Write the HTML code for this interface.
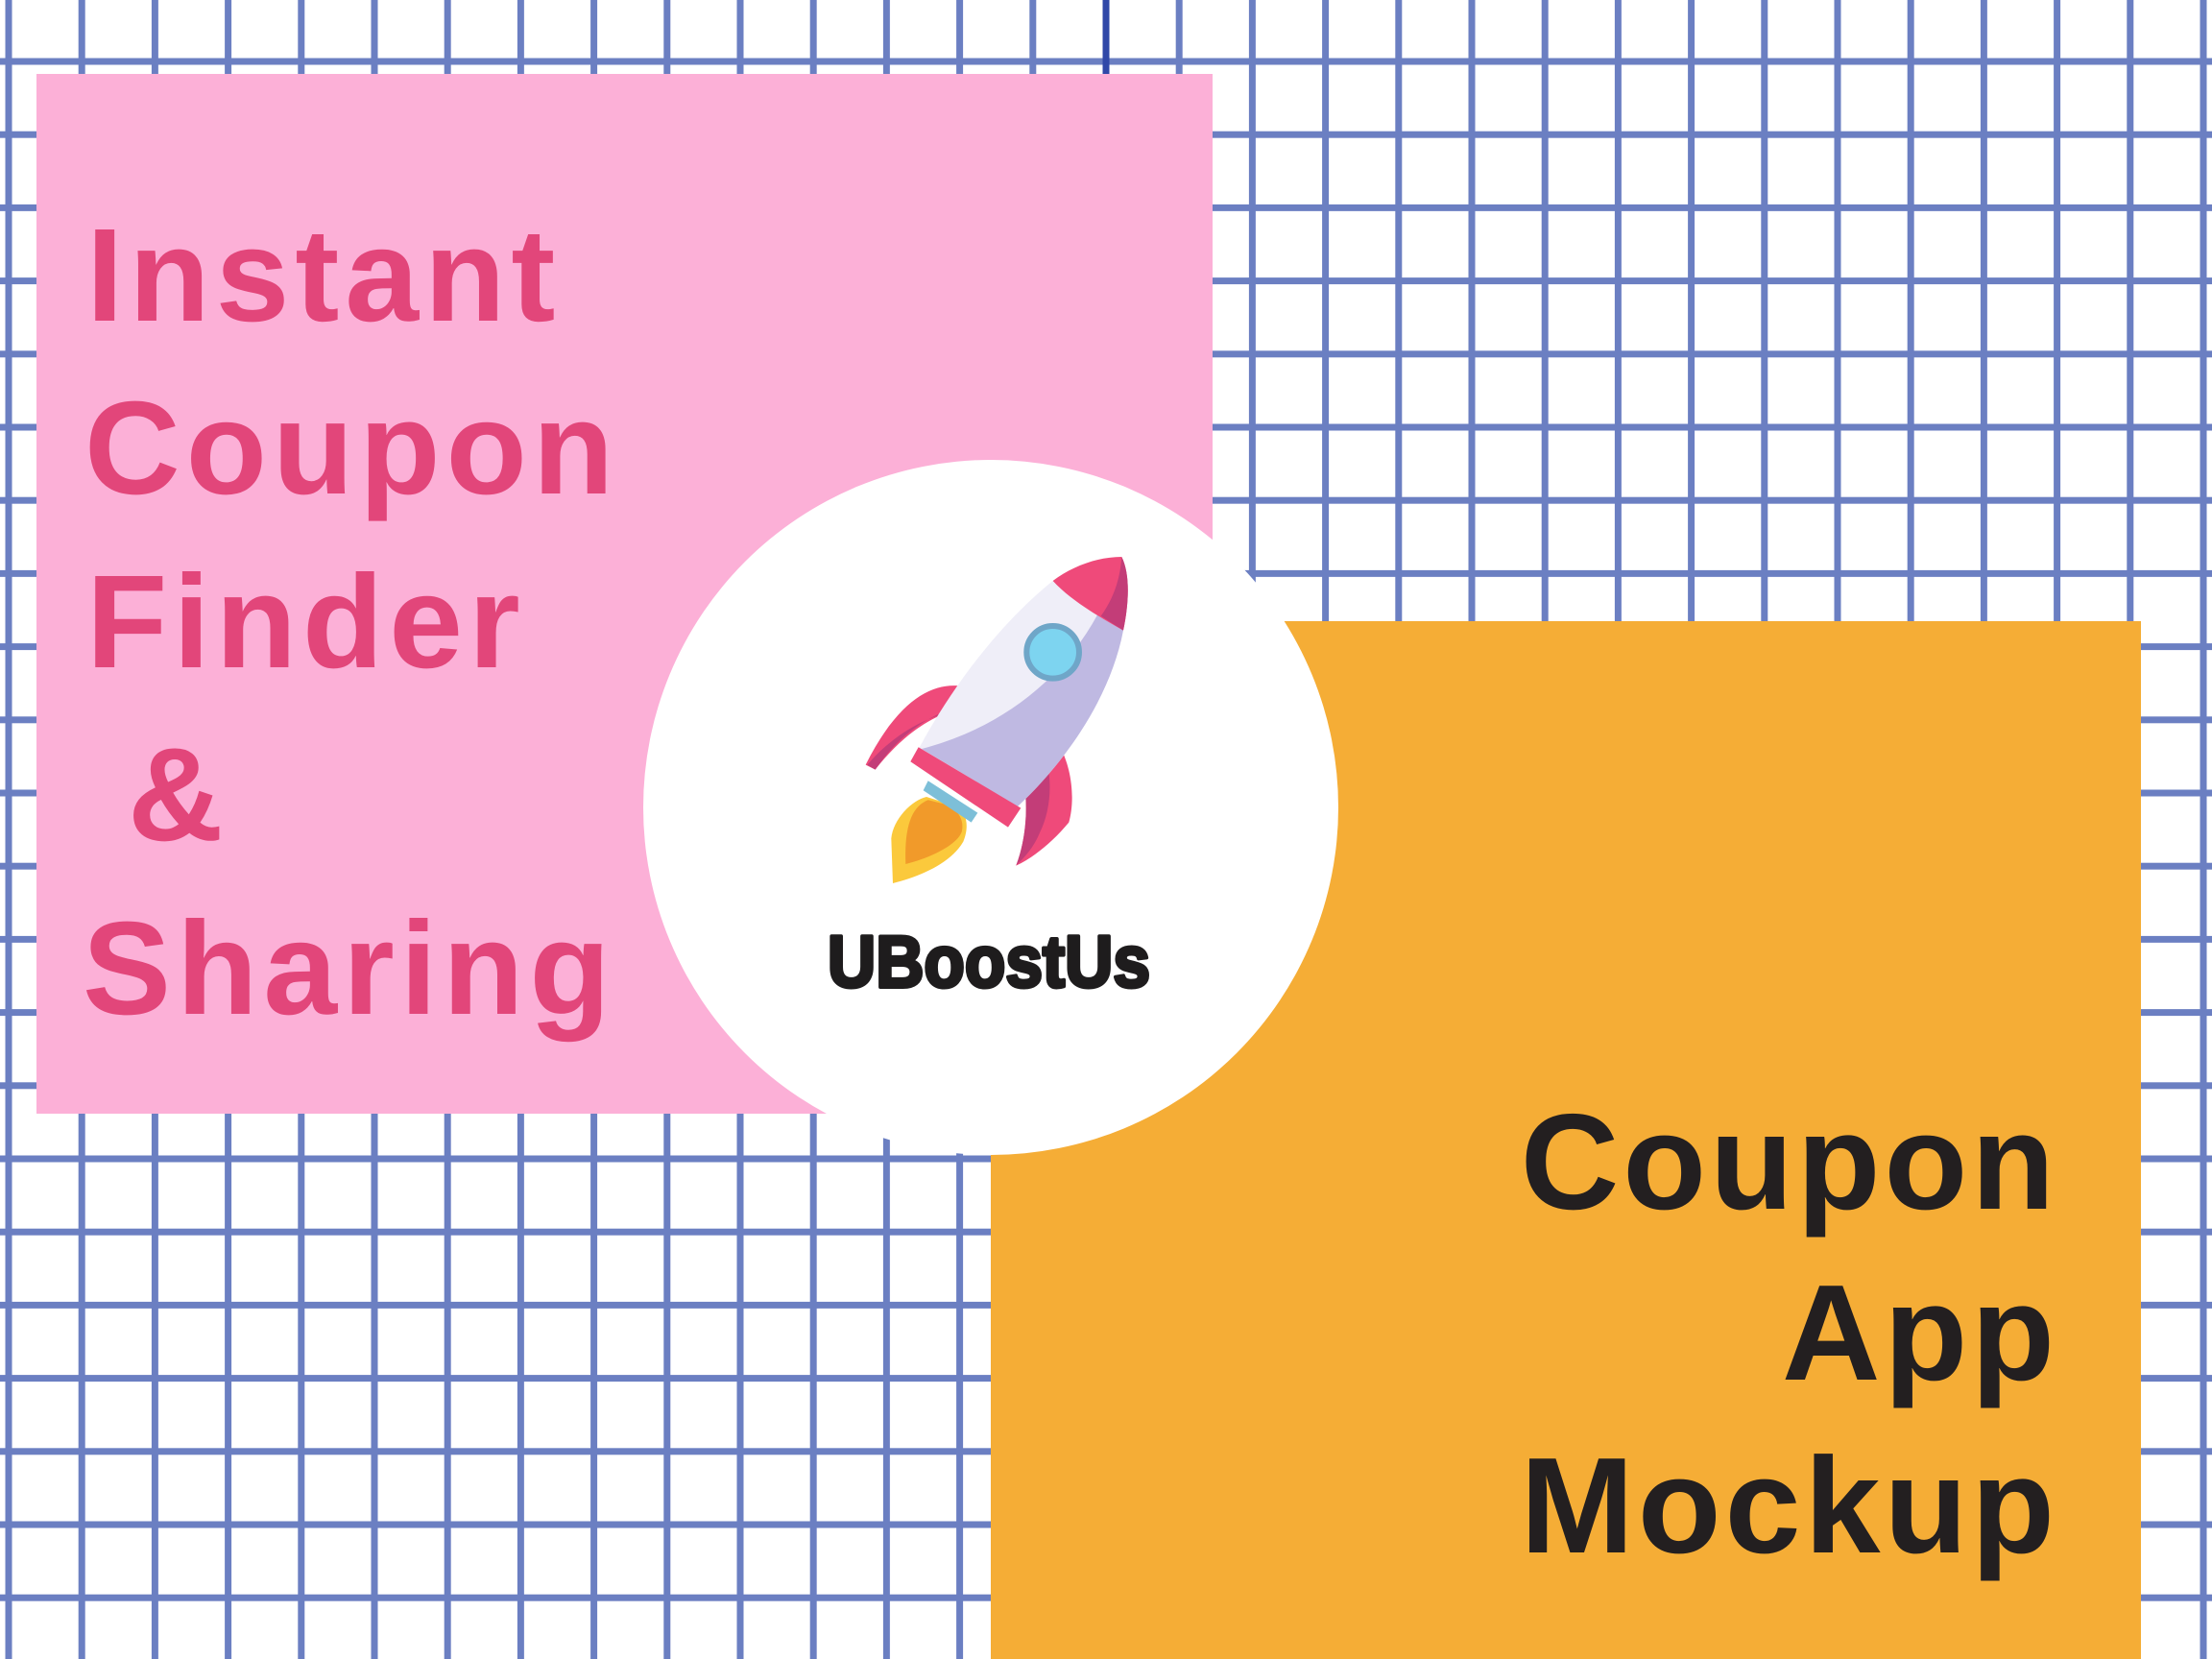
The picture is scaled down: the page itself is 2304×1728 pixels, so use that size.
<!DOCTYPE html>
<html><head><meta charset="utf-8"><style>
html,body{margin:0;padding:0;width:2304px;height:1728px;overflow:hidden;background:#fff}
svg{display:block}
</style></head><body>
<svg width="2304" height="1728" viewBox="0 0 2304 1728" xmlns="http://www.w3.org/2000/svg">
<defs>
<pattern id="g" patternUnits="userSpaceOnUse" x="5.5" y="60.5" width="76.2" height="76.2">
<rect x="0" y="0" width="7" height="76.2" fill="#6b7fc2"/>
<rect x="0" y="0" width="76.2" height="7" fill="#6b7fc2"/>
</pattern>
</defs>
<rect width="2304" height="1728" fill="#fff"/>
<rect width="2304" height="1728" fill="url(#g)"/>
<rect x="1148.5" y="0" width="7" height="77" fill="#3048a8"/>
<rect x="38" y="77" width="1225" height="1083" fill="#fcb0d7"/>
<rect x="1032" y="647" width="1198" height="1081" fill="#f5ad36"/>
<circle cx="1032" cy="841" r="362" fill="#fff"/>
<g font-family="Liberation Sans, sans-serif" font-weight="bold" font-size="138" fill="#e2467a" letter-spacing="6">
<text x="90" y="334">Instant</text>
<text x="88" y="514">Coupon</text>
<text x="90" y="695">Finder</text>
<text x="133" y="875">&amp;</text>
<text x="86" y="1056">Sharing</text>
</g>
<g font-family="Liberation Sans, sans-serif" font-weight="bold" font-size="142" fill="#231f20" letter-spacing="4" text-anchor="end">
<text x="2144" y="1259">Coupon</text>
<text x="2144" y="1437">App</text>
<text x="2144" y="1617">Mockup</text>
</g>
<g transform="translate(850,540) scale(0.3333)">
<path d="M460,525 C370,510 260,560 155,770 L185,785 C260,690 330,640 400,610 Z" fill="#ef4a7a"/>
<path d="M410,600 C330,630 250,690 185,785 L160,770 C220,700 300,640 400,610 Z" fill="#c33d78"/>
<path d="M760,710 C800,780 810,880 790,950 C740,1010 680,1060 625,1085 C650,1020 660,940 655,870 Z" fill="#ef4a7a"/>
<path d="M720,760 C740,830 730,920 700,980 C680,1030 650,1060 625,1085 C650,1020 660,940 655,870 Z" fill="#c33d78"/>
<path d="M345,870 C300,880 240,940 235,1000 L240,1140 C320,1120 420,1080 460,1010 C480,960 470,920 440,900 Z" fill="#fbc93c"/>
<path d="M350,880 C300,900 275,960 280,1080 C360,1060 440,1020 455,980 C465,940 440,910 410,895 Z" fill="#f19a2a"/>
<polygon points="350,820 505,920 485,950 335,850" fill="#7dbfd8"/>
<path d="M740,195 L960,350 C920,560 780,760 630,900 L300,760 C400,560 560,340 740,195 Z" fill="#efeef8"/>
<path d="M960,350 C920,560 780,760 630,900 L330,720 C560,660 760,520 880,300 Z" fill="#bfb9e2"/>
<path d="M740,195 C800,150 880,120 955,120 C985,180 975,280 960,350 C890,310 800,260 740,195 Z" fill="#ef4a7a"/>
<path d="M955,120 C985,180 975,280 960,350 L890,305 C930,250 950,190 955,120 Z" fill="#c33d78"/>
<circle cx="740" cy="418" r="82" fill="#7dd4f0" stroke="#6fa6c8" stroke-width="18"/>
<polygon points="320,715 640,905 600,965 295,760" fill="#ef4a7a"/>
</g>
<text x="862" y="1028" font-family="Liberation Sans, sans-serif" font-weight="bold" font-size="76" fill="#1e1c1d" stroke="#1e1c1d" stroke-width="4" stroke-linejoin="round" textLength="336" lengthAdjust="spacingAndGlyphs">UBoostUs</text>
</svg>
</body></html>
